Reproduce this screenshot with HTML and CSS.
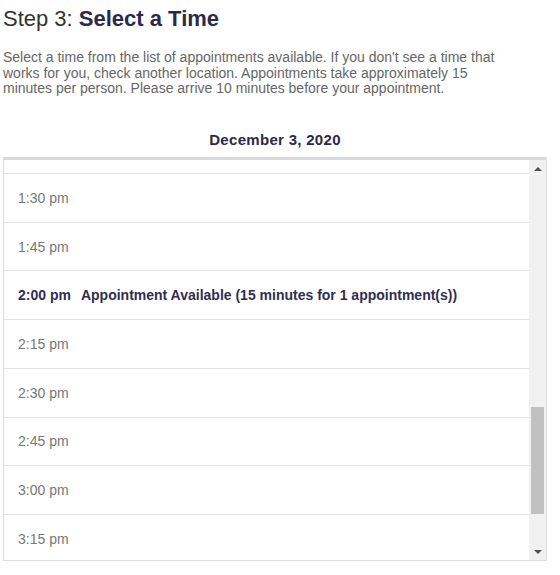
FILE: index.html
```html
<!DOCTYPE html>
<html lang="en">
<head>
  <meta charset="UTF-8">
  <title>Select a Time</title>
  <link rel="stylesheet" href="styles.css">
</head>
<body>

  <div class="step">
    <h2>Step 3: <strong>Select a Time</strong></h2>
    <p class="intro">Select a time from the list of appointments available. If you don't see a time that works for you, check another location. Appointments take approximately 15 minutes per person. Please arrive 10 minutes before your appointment.</p>

    <h3 class="date">December 3, 2020</h3>

    <div class="time-box">
      <div class="time-viewport">
        <ul class="time-list">
          <!-- bottom edge of the row scrolled out of view -->
          <li class="time-row cut"></li>
          <li class="time-row">1:30 pm</li>
          <li class="time-row">1:45 pm</li>
          <li class="time-row available">2:00 pm <span class="slot">Appointment Available (15 minutes for 1 appointment(s))</span></li>
          <li class="time-row">2:15 pm</li>
          <li class="time-row">2:30 pm</li>
          <li class="time-row">2:45 pm</li>
          <li class="time-row">3:00 pm</li>
          <li class="time-row">3:15 pm</li>
        </ul>
      </div>
      <div class="scrollbar">
        <span class="arrow up"></span>
        <div class="track">
          <div class="thumb"></div>
        </div>
        <span class="arrow down"></span>
      </div>
    </div>
  </div>

</body>
</html>
```

FILE: styles.css
```css
body {
  margin: 0;
  padding: 0 13px 0 3px;
  font-family: "Liberation Sans", Arial, sans-serif;
  background-color: #fff;
  color: #333;
}

h2 {
  margin: 6px 0 0;
  font-size: 22px;
  font-weight: normal;
  line-height: 25px;
  color: #333;
}

h2 strong {
  color: #2c2a4a;
}

.intro {
  margin: 19px 0 0;
  font-size: 14px;
  line-height: 15.7px;
  color: #666;
  max-width: 510px;
}

.date {
  margin: 34px 0 0;
  text-align: center;
  font-size: 15px;
  line-height: 18px;
  letter-spacing: 0.3px;
  color: #2c2a4a;
}

.time-box {
  display: flex;
  margin-top: 8px;
  height: 400px;
  border: 1px solid #ddd;
  border-top: 3px solid #dadada;
}

.time-viewport {
  flex: 1;
  overflow: hidden;
}

.time-list {
  list-style: none;
  margin: 0;
  padding: 0;
}

.time-row {
  box-sizing: border-box;
  height: 48.7px;
  display: flex;
  align-items: center;
  padding-left: 14px;
  border-bottom: 1px solid #e3e3e3;
  font-size: 14px;
  color: #777;
}

.time-row.cut {
  height: 14px;
}

.time-row.available {
  font-weight: bold;
  color: #2f2e52;
}

.slot {
  margin-left: 10px;
}

.scrollbar {
  width: 17px;
  display: flex;
  flex-direction: column;
  align-items: center;
  background-color: #f1f1f1;
}

.track {
  flex: 1;
  width: 100%;
  display: flex;
  flex-direction: column;
  justify-content: flex-end;
  padding: 0 2px;
  box-sizing: border-box;
}

.thumb {
  height: 107px;
  margin-bottom: 36px;
  background-color: #c1c1c1;
}

.arrow {
  width: 0;
  height: 0;
  border-left: 4px solid transparent;
  border-right: 4px solid transparent;
}

.arrow.up {
  margin: 7px 0 0;
  border-bottom: 4px solid #505050;
}

.arrow.down {
  margin: 0 0 6px;
  border-top: 4px solid #505050;
}
```
